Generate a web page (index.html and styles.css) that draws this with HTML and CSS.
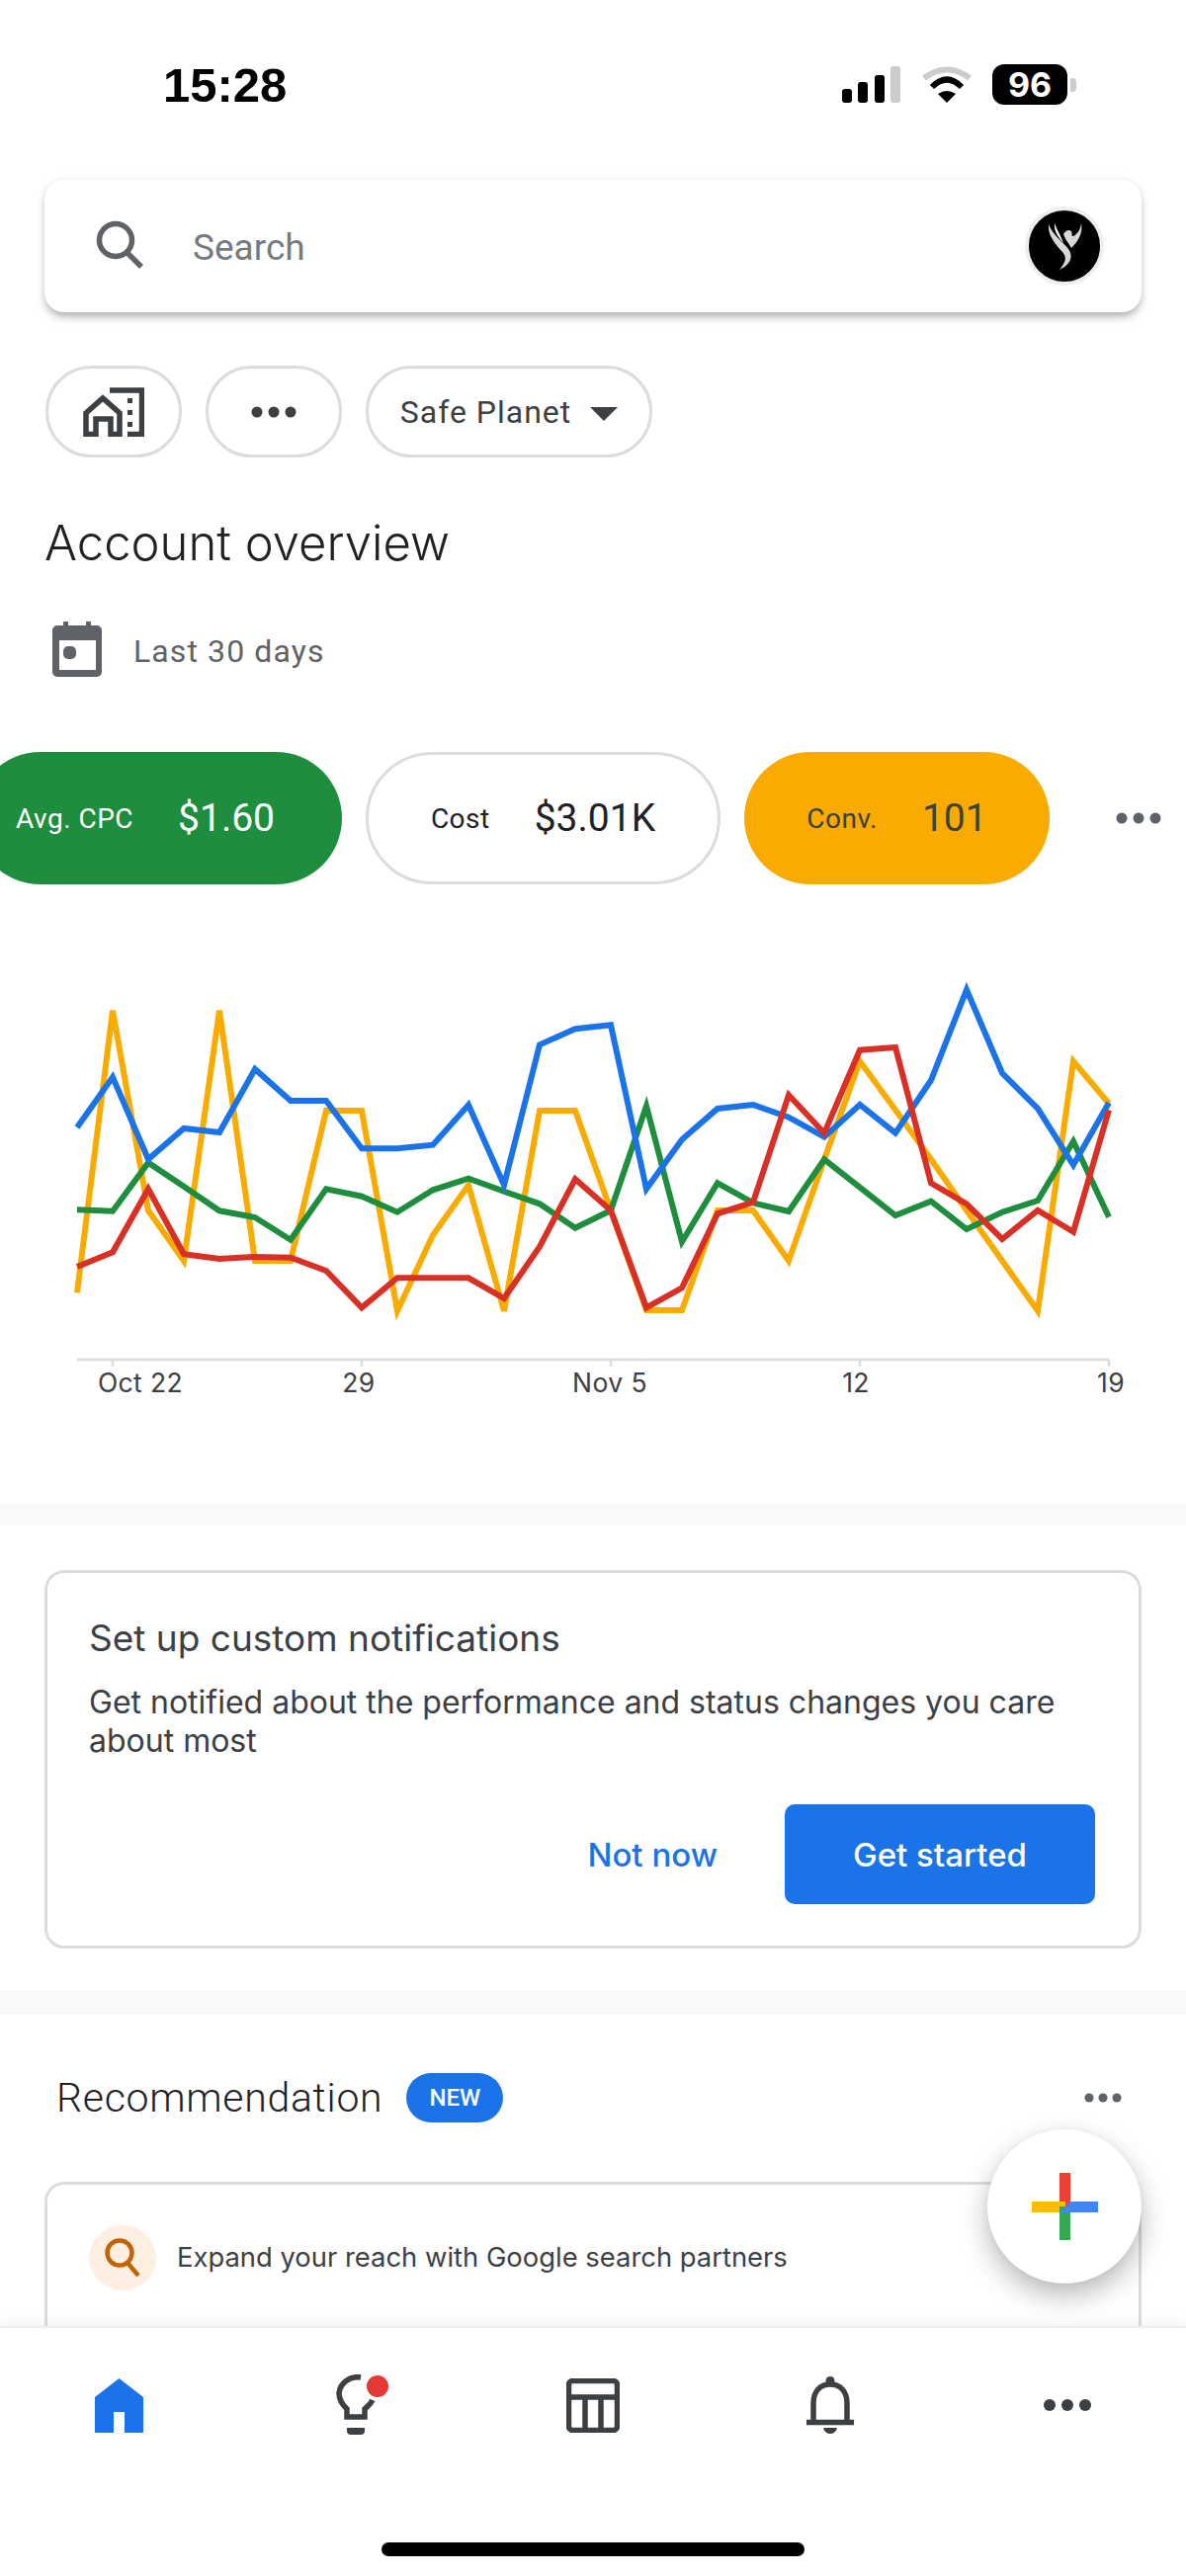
FILE: index.html
```html
<!DOCTYPE html>
<html lang="en">
<head>
<meta charset="utf-8">
<title>Account overview</title>
<link rel="stylesheet" href="styles.css">
</head>
<body>
<div class="page">
  <header class="status">
    <span class="clock">15:28</span>
    <div class="status-icons">
      <svg class="signal" viewBox="0 0 59 38"><rect x="0" y="23" width="10" height="14" rx="3"/><rect x="16" y="16" width="10" height="21" rx="3"/><rect x="33" y="9" width="10" height="28" rx="3"/><rect class="dim" x="49" y="0" width="10" height="37" rx="3"/></svg>
      <svg class="wifi" viewBox="0 0 52 37"><path class="wifi-far" d="M3 12Q26 -5 49 12"/><path class="wifi-mid" d="M11 21Q26 6 41 21"/><path d="M17 28Q26 22 35 28L26 37Z"/></svg>
      <div class="battery"><span class="battery-level">96</span></div>
      <span class="battery-cap"></span>
    </div>
  </header>

  <div class="search">
    <svg class="search-icon" viewBox="0 0 50 50"><circle cx="20" cy="20" r="16.500"/><path d="M31 32L46 47"/></svg>
    <span class="search-text">Search</span>
    <div class="avatar">
      <svg class="avatar-logo" viewBox="0 0 35 48"><path d="M1 2C0 12 6 20 15 30C20 36 18 40 12 48C24 42 26 34 21 27C14 18 6 14 1 2Z"/><path d="M34 1C36 12 30 20 24 26C22 22 18 18 16 12C18 8 22 7 24 9C25 12 24 14 26 14C30 12 33 8 34 1Z"/><path class="logo-soft" d="M7 1C6 9 11 15 16 21C13 13 10 9 7 1Z"/></svg>
    </div>
  </div>

  <div class="chips">
    <div class="chip chip-icon">
      <svg class="org-icon" viewBox="0 0 62 50"><path class="org-line" d="M3 47.500V26L20 11L37 26V47.500H28V32H13V47.500Z"/><path class="org-line" d="M27 3H59.500V47.500H45"/><rect x="45" y="11" width="5" height="5"/><rect x="45" y="23" width="5" height="5"/><rect x="45" y="35" width="5" height="5"/></svg>
    </div>
    <div class="chip chip-icon">
      <svg class="dots dots-chip" viewBox="0 0 46 12"><circle cx="6" cy="6" r="5.500"/><circle cx="23" cy="6" r="5.500"/><circle cx="40" cy="6" r="5.500"/></svg>
    </div>
    <div class="chip chip-account">
      <span>Safe Planet</span>
      <span class="caret"></span>
    </div>
  </div>

  <h1 class="title">Account overview</h1>

  <div class="range">
    <svg class="calendar" viewBox="0 0 50 56"><path d="M11 0H16V4H34V0H39V4H45A5 5 0 0 1 50 9V51A5 5 0 0 1 45 56H5A5 5 0 0 1 0 51V9A5 5 0 0 1 5 4H11ZM7 19V49H44V19Z" fill-rule="evenodd"/><rect x="11" y="25" width="13" height="13" rx="5"/></svg>
    <span class="range-text">Last 30 days</span>
  </div>

  <div class="metrics">
    <div class="metric metric-green"><span class="metric-label">Avg. CPC</span><span class="metric-value">$1.60</span></div>
    <div class="metric metric-plain"><span class="metric-label">Cost</span><span class="metric-value">$3.01K</span></div>
    <div class="metric metric-yellow"><span class="metric-label">Conv.</span><span class="metric-value">101</span></div>
    <svg class="dots dots-metric" viewBox="0 0 46 12"><circle cx="6" cy="6" r="5.500"/><circle cx="23" cy="6" r="5.500"/><circle cx="40" cy="6" r="5.500"/></svg>
  </div>

  <svg class="chart" viewBox="0 0 1200 490">
    <path class="axis" d="M78 416H1122M114 416V423M366 416V423M618 416V423M870 416V423M1122 416V423"/>
    <text class="tick" x="142" y="449">Oct 22</text>
    <text class="tick" x="363" y="449">29</text>
    <text class="tick" x="617" y="449">Nov 5</text>
    <text class="tick" x="866" y="449">12</text>
    <text class="tick" x="1124" y="449">19</text>
    <polyline class="line line-yellow" points="78,348.300 114,62.700 150,265 186,316 222,62.700 258,316 294,316 330,164 366,164 402,366.700 438,290 474,239.300 510,366.700 546,164 582,164 618,265 654,366 690,366 726,265 762,265 798,316 834,213.300 870,114 906,163.300 942,213.300 978,265 1014,316 1050,366.700 1086,114 1122,156.700"/>
    <polyline class="line line-green" points="78,264.300 114,265.700 150,216.700 186,240.700 222,265.300 258,272 294,294.700 330,243.300 366,250.700 402,266.700 438,244.300 474,232.700 510,245.700 546,258.300 582,282.700 618,265 654,159.300 690,296.700 726,237.300 762,257.300 798,266 834,213.300 870,241.700 906,270 942,255.700 978,284 1014,266.700 1050,255 1086,195 1122,271.700"/>
    <polyline class="line line-blue" points="78,181 114,130 150,213.300 186,182 222,186 258,122 294,154 330,154 366,202.300 402,202.300 438,198.700 474,158.300 510,239.300 546,97.300 582,81.300 618,77.300 654,243.300 690,193.300 726,162 762,158 798,170.700 834,190.700 870,158 906,186.700 942,133.300 978,41.700 1014,126 1050,162 1086,219 1122,156"/>
    <polyline class="line line-red" points="78,322 114,307.300 150,243.300 186,309.300 222,314 258,312 294,312.700 330,326 366,363.300 402,333.300 438,333.300 474,333.300 510,354 546,301.700 582,233.300 618,265 654,363.300 690,343.300 726,268.300 762,256.700 798,148.300 834,186.700 870,102.700 906,100 942,237.300 978,258.300 1014,294 1050,265 1086,286.700 1122,163.300"/>
  </svg>

  <div class="band band-first"></div>

  <section class="notify">
    <h2 class="notify-title">Set up custom notifications</h2>
    <p class="notify-body">Get notified about the performance and status changes you care about most</p>
    <div class="notify-actions">
      <span class="btn-text">Not now</span>
      <span class="btn-fill">Get started</span>
    </div>
  </section>

  <div class="band band-second"></div>

  <div class="rec-head">
    <h2 class="rec-title">Recommendation</h2>
    <span class="pill">NEW</span>
    <svg class="dots dots-rec" viewBox="0 0 46 12"><circle cx="6" cy="6" r="5.500"/><circle cx="23" cy="6" r="5.500"/><circle cx="40" cy="6" r="5.500"/></svg>
  </div>

  <section class="rec-card">
    <div class="rec-badge">
      <svg class="rec-icon" viewBox="0 0 36 40"><circle cx="15" cy="15" r="12.500"/><path d="M23 25L34 38"/></svg>
    </div>
    <span class="rec-text">Expand your reach with Google search partners</span>
  </section>

  <div class="fab">
    <svg class="plus" viewBox="0 0 67 68"><rect x="28" y="0" width="11" height="34" fill="#ea4335"/><rect x="0" y="29" width="34" height="11" fill="#fbbc04"/><rect x="28" y="34" width="11" height="34" fill="#34a853"/><path d="M28 40L39 29H67V40Z" fill="#4285f4"/></svg>
  </div>

  <nav class="nav">
    <div class="nav-items">
      <div class="nav-item"><svg class="nav-home" viewBox="0 0 49 55"><path d="M24.500 0L49 19V55H30V34H19V55H0V19Z"/></svg></div>
      <div class="nav-item nav-bulb-item">
        <svg class="nav-bulb" viewBox="0 0 54 62"><path class="nav-line" d="M25 3C14 1 4 9 3 19C3 26 6 30 11 35V43H29V35C32 32 35 30 37 26"/><path class="bulb-base" d="M11 54H29V57Q29 61 25 61H15Q11 61 11 57Z"/><circle class="bulb-dot" cx="42" cy="12" r="11"/></svg>
      </div>
      <div class="nav-item"><svg class="nav-table" viewBox="0 0 54 55"><rect class="nav-line" x="2.500" y="2.500" width="49" height="50" rx="4"/><path class="nav-line" d="M2 19H52M19 19V53M35 19V53"/></svg></div>
      <div class="nav-item"><svg class="nav-bell" viewBox="0 0 48 58"><circle cx="24" cy="4.500" r="4.500"/><path class="nav-line" d="M7 46V27C7 15 14 8 24 8C34 8 41 15 41 27V46"/><path class="nav-line" d="M0 46.500H48"/><path d="M17 52H31C30 57 26 58 24 58C22 58 18 57 17 52Z"/></svg></div>
      <div class="nav-item"><svg class="dots dots-nav" viewBox="0 0 48 12"><circle cx="6" cy="6" r="6"/><circle cx="24" cy="6" r="6"/><circle cx="42" cy="6" r="6"/></svg></div>
    </div>
    <div class="home-bar"></div>
  </nav>
</div>
</body>
</html>
```

FILE: styles.css
```css
* { box-sizing: border-box; }
html, body { margin: 0; padding: 0; background: #fff; }
body { font-family: Roboto, "Noto Sans", "Liberation Sans", sans-serif; color: #202124; }
h1, h2, p { margin: 0; font-weight: 400; }

.page { position: relative; width: 1200px; height: 2607px; overflow: hidden; background: #fff; }

/* status bar */
.status { height: 182px; padding: 58px 111px 0 165px; display: flex; justify-content: space-between; align-items: flex-start; }
.clock { font: 700 49px/56px "Liberation Sans", Arial, sans-serif; color: #000; }
.status-icons { display: flex; align-items: flex-start; margin-top: 7px; }
.signal { width: 59px; height: 38px; margin-top: 2px; fill: #000; }
.signal .dim { fill: #ccc; }
.wifi { width: 52px; height: 37px; margin: 2px 0 0 21px; fill: #000; }
.wifi-far, .wifi-mid { fill: none; stroke-width: 6; }
.wifi-far { stroke: #ccc; }
.wifi-mid { stroke: #000; }
.battery { width: 76px; height: 41px; margin-left: 20px; background: #000; border-radius: 12px; display: flex; align-items: center; justify-content: center; }
.battery-level { font: 700 34px/1 Inter, "Liberation Sans", sans-serif; color: #fff; }
.battery-cap { width: 6px; height: 14px; margin: 14px 0 0 3px; background: #ccc; border-radius: 0 4px 4px 0; }

/* search */
.search { height: 134px; margin: 0 45px; padding: 0 38px 0 52px; display: flex; align-items: center; background: #fff; border-radius: 20px; box-shadow: 0 6px 10px -2px rgba(60,64,67,.42), 0 0 8px rgba(60,64,67,.08); }
.search-icon { width: 50px; height: 50px; fill: none; stroke: #5f6368; stroke-width: 5.500; margin-top: -3px; }
.search-text { margin-left: 48px; padding-top: 2px; font-size: 37px; color: #757a7f; }
.avatar { width: 80px; height: 80px; margin-left: auto; border-radius: 50%; background: #000; border: 4px solid #eee; display: flex; align-items: center; justify-content: center; }
.avatar-logo { width: 35px; height: 48px; fill: #d8d8d8; }
.logo-soft { fill: #fff; }

/* chips */
.chips { display: flex; gap: 24px; margin: 54px 0 0 46px; }
.chip { height: 93px; border: 3px solid #dadce0; border-radius: 47px; display: flex; align-items: center; justify-content: center; }
.chip-icon { width: 138px; }
.org-icon { width: 62px; height: 50px; fill: #3c4043; }
.org-line { fill: none; stroke: #3c4043; stroke-width: 5.500; }
.dots { fill: #3c4043; display: block; }
.dots-chip { width: 46px; height: 12px; }
.chip-account { width: 290px; gap: 19px; font-size: 32px; letter-spacing: 1px; color: #3c4043; }
.caret { width: 0; height: 0; border-left: 14px solid transparent; border-right: 14px solid transparent; border-top: 14px solid #3c4043; margin-top: 4px; }

/* header */
.title { margin: 59px 0 0 45px; font-family: Inter, Roboto, sans-serif; font-size: 49px; line-height: 56px; font-weight: 300; color: #202124; }
.range { display: flex; align-items: center; margin: 51px 0 0 53px; height: 56px; gap: 32px; font-size: 32px; letter-spacing: 1.100px; color: #5f6368; }
.range-text { padding-top: 4px; }
.calendar { width: 50px; height: 56px; fill: #5f6368; }

/* metrics */
.metrics { display: flex; align-items: center; gap: 24px; margin: 76px 0 0 -26px; height: 134px; }
.metric { height: 134px; border-radius: 67px; display: flex; align-items: center; justify-content: center; }
.metric-green { width: 372px; gap: 45px; background: #1e8e3e; color: #fff; padding-right: 26px; }
.metric-plain { width: 359px; gap: 45px; border: 3px solid #dadce0; color: #202124; }
.metric-yellow { width: 309px; gap: 45px; background: #f9ab00; color: #3c4043; }
.metric-label { font-size: 28px; letter-spacing: .5px; }
.metric-value { font-size: 39px; font-weight: 400; }
.dots-metric { width: 46px; height: 12px; margin-left: 43px; fill: #5f6368; }

/* chart */
.chart { display: block; width: 1200px; height: 490px; margin-top: 65px; }
.axis { fill: none; stroke: #dadce0; stroke-width: 2.500; }
.tick { font-family: Inter, Roboto, sans-serif; font-size: 26.500px; letter-spacing: .4px; text-anchor: middle; fill: #3c4043; }
.line { fill: none; stroke-width: 6; stroke-linejoin: miter; }
.line-blue { stroke: #1a73e8; }
.line-green { stroke: #1e8e3e; }
.line-yellow { stroke: #f9ab00; }
.line-red { stroke: #d93025; }

.band { background: #f8f9fa; }
.band-first { height: 22px; margin-top: 72px; }
.band-second { height: 24px; margin-top: 43px; }

/* notification */
.notify { height: 383px; margin: 45px 45px 0; padding: 44px 44px 0 42px; border: 3px solid #dadce0; border-radius: 20px; display: flex; flex-direction: column; font-family: Inter, Roboto, sans-serif; }
.notify-title { font-size: 37px; line-height: 44px; font-weight: 400; color: #3c4043; }
.notify-body { margin-top: 23px; font-size: 32px; line-height: 39px; color: #3c4043; }
.notify-actions { margin-top: 45px; display: flex; align-items: center; justify-content: flex-end; gap: 68px; }
.btn-text { font-size: 33px; font-weight: 500; color: #1a73e8; }
.btn-fill { width: 314px; height: 101px; background: #1a73e8; border-radius: 10px; color: #fff; font-size: 33px; font-weight: 500; display: flex; align-items: center; justify-content: center; }

/* recommendation */
.rec-head { display: flex; align-items: center; margin: 59px 65px 0 57px; height: 50px; }
.rec-title { font-size: 41px; line-height: 50px; font-weight: 300; letter-spacing: .7px; color: #202124; }
.pill { margin-left: 24px; width: 98px; height: 50px; border-radius: 25px; background: #1a73e8; color: #fff; font-size: 24px; font-weight: 500; display: flex; align-items: center; justify-content: center; }
.dots-rec { width: 38px; height: 10px; margin-left: auto; fill: #5f6368; }

.rec-card { height: 300px; margin: 60px 45px 0; padding: 41px 42px 0; border: 3px solid #dadce0; border-bottom: 0; border-radius: 20px 20px 0 0; display: flex; align-items: flex-start; }
.rec-badge { width: 68px; height: 66px; border-radius: 50%; background: #feefe3; display: flex; align-items: center; justify-content: center; flex-shrink: 0; }
.rec-icon { width: 36px; height: 40px; fill: none; stroke: #c26401; stroke-width: 4.500; }
.rec-text { margin: 14px 0 0 21px; font-family: Inter, Roboto, sans-serif; font-size: 27.400px; line-height: 36px; color: #3c4043; }

/* floating action */
.fab { position: absolute; left: 999px; top: 2155px; width: 156px; height: 156px; border-radius: 50%; background: #fff; box-shadow: 0 12px 28px rgba(0,0,0,.28), 0 0 8px rgba(0,0,0,.04); display: flex; align-items: center; justify-content: center; z-index: 2; }
.plus { width: 67px; height: 68px; display: block; }

/* bottom nav */
.nav { position: absolute; left: 0; right: 0; top: 2354px; height: 253px; background: #fff; border-top: 2px solid #eceef0; box-shadow: 0 -4px 12px rgba(60,64,67,.06); padding-top: 46px; z-index: 3; }
.nav-items { display: grid; grid-template-columns: repeat(5, 240px); height: 64px; }
.nav-item { display: flex; align-items: center; justify-content: center; }
.nav-line { fill: none; stroke: #3c4043; stroke-width: 5.500; }
.nav-home { width: 49px; height: 55px; fill: #1a73e8; }
.nav-bulb-item { padding-left: 13px; }
.nav-bulb { width: 54px; height: 62px; }
.bulb-base { fill: #3c4043; }
.bulb-dot { fill: #e53935; }
.nav-table { width: 54px; height: 55px; }
.nav-bell { width: 48px; height: 58px; fill: #3c4043; }
.dots-nav { width: 48px; height: 12px; }
.home-bar { width: 428px; height: 14px; margin: 107px auto 0; background: #000; border-radius: 7px; }
```
